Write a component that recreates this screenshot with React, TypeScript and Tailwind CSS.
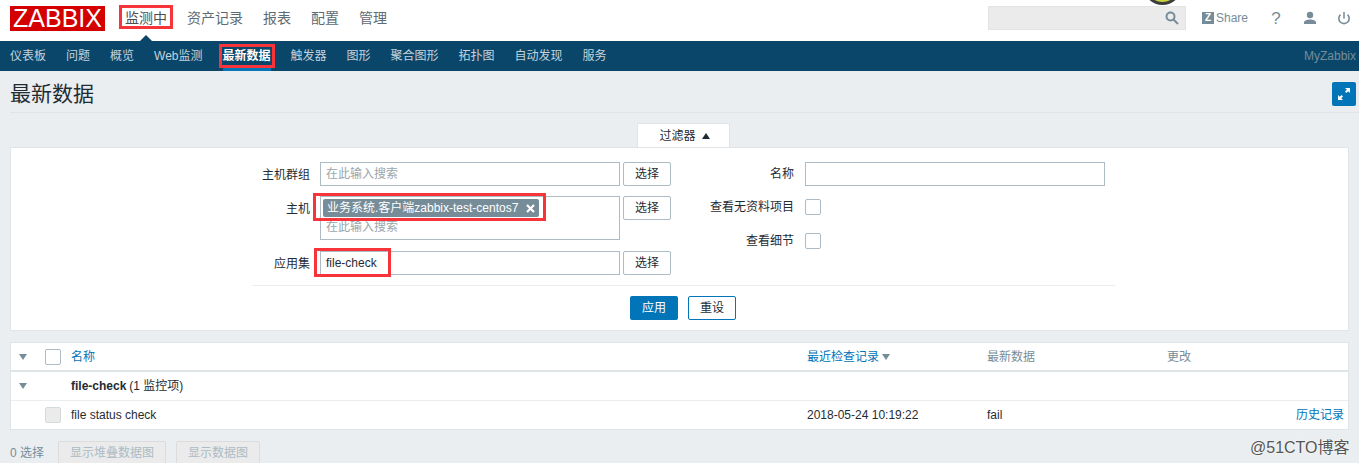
import React from 'react';

const FONT = "font-['Liberation_Sans','Noto_Sans_CJK_SC',sans-serif]";

const mainMenu = ['监测中', '资产记录', '报表', '配置', '管理'];

const subMenu = ['仪表板', '问题', '概览', 'Web监测', '最新数据', '触发器', '图形', '聚合图形', '拓扑图', '自动发现', '服务'];

function RedBox({ className }: { className: string }) {
  return <div className={`absolute border-[3px] border-[#f6343a] pointer-events-none ${className}`} />;
}

function SelectButton() {
  return (
    <button className="h-[24px] w-[48px] shrink-0 rounded-[2px] border border-[#acbbc4] bg-white text-[12px] text-[#1f2c33]">选择</button>
  );
}

function Triangle({ className }: { className?: string }) {
  return (
    <svg width="8" height="6" viewBox="0 0 8 6" className={className}>
      <path d="M0 0h8L4 6z" fill="#768d99" />
    </svg>
  );
}

function Checkbox({ disabled }: { disabled?: boolean }) {
  return <div className={`h-[16px] w-[16px] rounded-[2px] border ${disabled ? 'bg-[#ebebeb] border-[#d5dadd]' : 'bg-white border-[#acbbc4]'}`} />;
}

function TopBar() {
  return (
    <div className="relative flex h-[41px] items-center bg-white">
      <div className="ml-[10px] mb-[4px] flex h-[25px] w-[95px] items-center justify-center bg-[#d40000] text-[25px] leading-none text-white">ZABBIX</div>
      <div className="ml-[20px] mb-[5px] flex items-center gap-[20px] text-[14px]">
        {mainMenu.map((m, i) => (
          <span key={m} className={`whitespace-nowrap ${i === 0 ? 'text-[#4f4f4f]' : 'text-[#5f6b72]'}`}>{m}</span>
        ))}
      </div>
      <div className="ml-auto mb-[5px] flex items-center">
        <div className="flex h-[24px] w-[198px] items-center justify-end border border-[#e3e3e3] bg-[#ebebeb] pr-[6px]">
          <svg width="14" height="14" viewBox="0 0 14 14" fill="none" stroke="#768d99" strokeWidth="2">
            <circle cx="5.5" cy="5.5" r="4" />
            <path d="M8.5 8.5l4.5 4.5" />
          </svg>
        </div>
        <div className="ml-[16px] flex w-[46px] items-center">
          <div className="flex h-[12px] w-[12px] shrink-0 items-center justify-center bg-[#768d99] text-[10px] font-bold leading-none text-white">Z</div>
          <span className="ml-[2px] text-[12px] text-[#768d99]">Share</span>
        </div>
        <span className="ml-[23px] w-[10px] text-center text-[17px] leading-none text-[#768d99]">?</span>
        <svg width="14" height="14" viewBox="0 0 14 14" className="ml-[22px]" fill="#768d99">
          <circle cx="7" cy="4" r="3.2" />
          <path d="M1 13v-1.5C1 9.5 4 8.5 7 8.5s6 1 6 3V13z" />
        </svg>
        <svg width="14" height="14" viewBox="0 0 14 14" className="ml-[20px] mr-[8px]" fill="none" stroke="#768d99" strokeWidth="1.6">
          <path d="M7 1v6.5" />
          <path d="M3.5 3.6a5.2 5.2 0 1 0 7 0" />
        </svg>
      </div>
      <div className="absolute left-[1143px] top-[-34px] h-[39px] w-[39px] rounded-full border-[3px] border-[#3c3c3c] bg-[#c8d23c]" />
    </div>
  );
}

function SubNav() {
  return (
    <div className="relative flex h-[30px] items-center bg-[#0a466a] pl-[10px] text-[12px] text-[#c4d3dc]">
      <div className="absolute left-[140px] top-[-6px] h-0 w-0 border-x-[6px] border-b-[6px] border-x-transparent border-b-[#0a466a]" />
      <div className="flex h-full items-center gap-[20px]">
        {subMenu.map((s) => (
          <span key={s} className={`relative flex h-full items-center whitespace-nowrap ${s === '最新数据' ? 'font-bold text-white' : ''}`}>
            {s}
            {s === '最新数据' && <span className="absolute bottom-0 left-0 right-0 h-[3px] bg-[#0275b8]" />}
          </span>
        ))}
      </div>
      <span className="ml-auto mr-[3px] text-[#768d99]">MyZabbix</span>
    </div>
  );
}

function FilterPanel() {
  return (
    <div className="mx-[10px] h-[184px] rounded-[1px] border border-[#dfe4e7] bg-white">
      <div className="flex pt-[14px]">
        <div className="ml-[220px] flex flex-col">
          <div className="flex gap-[3px]">
            <label className="mr-[7px] w-[79px] pt-[4px] text-right text-[12px] text-[#1f2c33]">主机群组</label>
            <div className="flex h-[24px] w-[300px] items-center border border-[#acbbc4] px-[5px] text-[12px] text-[#9aa5ab]">在此输入搜索</div>
            <SelectButton />
          </div>
          <div className="mt-[10px] flex gap-[3px]">
            <label className="mr-[7px] w-[79px] pt-[4px] text-right text-[12px] text-[#1f2c33]">主机</label>
            <div className="h-[44px] w-[300px] border border-[#acbbc4] px-[2px] pt-[2px] text-[12px]">
              <div className="flex h-[18px] w-[216px] items-center rounded-[2px] bg-[#768d99] pl-[4px] whitespace-nowrap text-white">
                业务系统.客户端zabbix-test-centos7
                <svg width="9" height="9" viewBox="0 0 9 9" className="ml-[8px]" stroke="white" strokeWidth="2.2">
                  <path d="M1 1l7 7M8 1L1 8" />
                </svg>
              </div>
              <div className="mt-[3px] pl-[3px] leading-[14px] text-[#9aa5ab]">在此输入搜索</div>
            </div>
            <SelectButton />
          </div>
          <div className="mt-[11px] flex gap-[3px]">
            <label className="mr-[7px] w-[79px] pt-[4px] text-right text-[12px] text-[#1f2c33]">应用集</label>
            <div className="flex h-[24px] w-[300px] items-center border border-[#acbbc4] px-[5px] text-[12px] text-[#1f2c33]">file-check</div>
            <SelectButton />
          </div>
        </div>
        <div className="flex flex-col">
          <div className="flex h-[24px] items-center">
            <label className="w-[123px] text-right text-[12px] text-[#1f2c33]">名称</label>
            <div className="ml-[11px] h-[24px] w-[300px] border border-[#acbbc4]" />
          </div>
          <div className="mt-[9px] flex h-[24px] items-center">
            <label className="w-[123px] text-right text-[12px] text-[#1f2c33]">查看无资料项目</label>
            <div className="ml-[11px]"><Checkbox /></div>
          </div>
          <div className="mt-[10px] flex h-[24px] items-center">
            <label className="w-[123px] text-right text-[12px] text-[#1f2c33]">查看细节</label>
            <div className="ml-[11px]"><Checkbox /></div>
          </div>
        </div>
      </div>
      <div className="ml-[241px] mr-[233px] mt-[10px] border-t border-[#ebeef0] pt-[10px]">
        <div className="flex gap-[10px] pl-[378px]">
          <button className="h-[24px] w-[48px] rounded-[2px] bg-[#0275b8] text-[12px] text-white">应用</button>
          <button className="h-[24px] w-[48px] rounded-[2px] border border-[#0275b8] bg-white text-[12px] text-[#1f2c33]">重设</button>
        </div>
      </div>
    </div>
  );
}

function DataTable() {
  return (
    <div className="mx-[10px] mt-[11px] border border-[#dfe4e7] bg-white text-[12px]">
      <div className="flex h-[29px] items-center border-b-[2px] border-[#dfe4e7]">
        <Triangle className="ml-[8px]" />
        <div className="ml-[18px]"><Checkbox /></div>
        <span className="ml-[10px] w-[736px] text-[#0275b8]">名称</span>
        <span className="flex w-[180px] items-center text-[#0275b8]">最近检查记录<Triangle className="ml-[3px]" /></span>
        <span className="w-[180px] text-[#768d99]">最新数据</span>
        <span className="text-[#768d99]">更改</span>
      </div>
      <div className="flex h-[29px] items-center border-b border-[#ebeef0]">
        <Triangle className="ml-[8px]" />
        <span className="ml-[44px] font-bold text-[#1f2c33]">file-check</span>
        <span className="ml-[3px] text-[#1f2c33]">(1 监控项)</span>
      </div>
      <div className="flex h-[28px] items-center">
        <div className="ml-[34px]"><Checkbox disabled /></div>
        <span className="ml-[10px] w-[736px] text-[#1f2c33]">file status check</span>
        <span className="w-[180px] text-[#1f2c33]">2018-05-24 10:19:22</span>
        <span className="text-[#1f2c33]">fail</span>
        <span className="ml-auto mr-[4px] text-[#0275b8]">历史记录</span>
      </div>
    </div>
  );
}

export default function App() {
  return (
    <div className={`relative h-[463px] w-[1359px] overflow-hidden bg-[#ebeef0] ${FONT}`}>
      <TopBar />
      <SubNav />
      <div className="ml-[10px] flex h-[42px] items-center justify-between border-b border-[#dfe4e7] pr-[3px] pt-[4px]">
        <h1 className="text-[21px] font-normal text-[#1f2c33]">最新数据</h1>
        <div className="flex h-[24px] w-[24px] items-center justify-center rounded-[2px] bg-[#0275b8]">
          <svg width="14" height="14" viewBox="0 0 14 14" fill="white">
            <path d="M8 1h5v5l-1.8-1.8L9.4 6 8 4.6l1.8-1.8zM6 13H1V8l1.8 1.8L4.6 8 6 9.4l-1.8 1.8z" />
          </svg>
        </div>
      </div>
      <div className="mt-[10px] flex justify-center pl-[7px]">
        <div className="flex h-[24px] w-[93px] items-center gap-[6px] rounded-t-[2px] border-x border-t border-[#dfe4e7] bg-white pl-[22px] text-[12px] text-[#1f2c33]">
          过滤器
          <svg width="8" height="6" viewBox="0 0 8 6"><path d="M0 6h8L4 0z" fill="#1f2c33" /></svg>
        </div>
      </div>
      <FilterPanel />
      <DataTable />
      <div className="mt-[11px] flex items-center pl-[10px] text-[12px] text-[#768d99]">
        <span>0 选择</span>
        <button className="ml-[14px] h-[24px] w-[108px] rounded-[2px] border border-[#dcdcdc] bg-[#ebebeb] text-[#acbbc4]">显示堆叠数据图</button>
        <button className="ml-[10px] h-[24px] w-[84px] rounded-[2px] border border-[#dcdcdc] bg-[#ebebeb] text-[#acbbc4]">显示数据图</button>
      </div>
      <span className="absolute left-[1250px] top-[436px] text-[16px] text-[#555] [text-shadow:0_0_2px_white]">@51CTO博客</span>

      <RedBox className="left-[119px] top-[5px] h-[24px] w-[54px]" />
      <RedBox className="left-[219px] top-[44px] h-[24px] w-[56px]" />
      <RedBox className="left-[313px] top-[193px] h-[28px] w-[233px]" />
      <RedBox className="left-[314px] top-[248px] h-[29px] w-[77px]" />
    </div>
  );
}
